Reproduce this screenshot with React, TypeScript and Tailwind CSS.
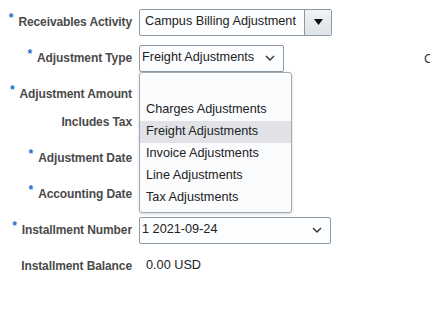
import React from "react";

const label = "text-[12px] tracking-[-0.1px] font-bold text-[#4a4a4a] leading-4";

function Req() {
  return <span className="text-[#1a6fc4] text-[12px] font-bold mr-[5px] relative -top-[4px]">*</span>;
}

function Chevron() {
  return (
    <svg width="10" height="6" viewBox="0 0 10 6" className="text-[#333]">
      <path d="M1 1 L5 5 L9 1" fill="none" stroke="currentColor" strokeWidth="1.4" />
    </svg>
  );
}

function Row({ req, text, h = "h-9", children }: { req?: boolean; text: string; h?: string; children?: React.ReactNode }) {
  return (
    <div className={`flex items-center ${h}`}>
      <div className={`w-[132px] shrink-0 text-right ${label}`}>
        {req && <Req />}
        {text}
      </div>
      <div className="ml-[7px] flex-1 flex items-center">{children}</div>
    </div>
  );
}

export default function App() {
  const items = ["", "Charges Adjustments", "Freight Adjustments", "Invoice Adjustments", "Line Adjustments", "Tax Adjustments"];

  return (
    <div className="w-[430px] h-[313px] overflow-hidden bg-white relative font-['Liberation_Sans',Arial,sans-serif]">
      <div className="flex pt-[4px]">
        <div className="w-[424px] shrink-0">
          <Row req text="Receivables Activity">
            <div className="flex h-[27px] w-[193px] border border-[#8b9aa6] rounded-[2px] bg-[#fcfdfe]">
              <div className="flex-1 flex items-center pl-[5px] text-[12.7px] text-[#222]">Campus Billing Adjustment</div>
              <div className="w-[27px] border-l border-[#8b9aa6] bg-gradient-to-b from-[#f1f3f5] to-[#dee2e6] flex items-center justify-center">
                <svg width="9" height="6" viewBox="0 0 9 6">
                  <path d="M0 0 H9 L4.5 6 Z" fill="#111" />
                </svg>
              </div>
            </div>
          </Row>
          <Row req text="Adjustment Type">
            <div className="flex items-center h-[27px] w-[145px] border border-[#8b9aa6] rounded-[2px] bg-[#fcfdfe] pl-[2px] pr-[8px] text-[12.7px] text-[#222]">
              <span className="flex-1">Freight Adjustments</span>
              <Chevron />
            </div>
          </Row>
          <Row req text="Adjustment Amount" />
          <div className="flex items-start h-7 pt-[2px]">
            <div className={`w-[132px] shrink-0 text-right ${label}`}>Includes Tax</div>
          </div>
          <Row req text="Adjustment Date" />
          <Row req text="Accounting Date" />
          <Row req text="Installment Number">
            <div className="flex items-center h-[27px] w-[192px] border border-[#8b9aa6] rounded-[2px] bg-[#fcfdfe] pl-[2px] pr-[8px] text-[12.7px] text-[#222]">
              <span className="flex-1">1 2021-09-24</span>
              <Chevron />
            </div>
          </Row>
          <Row text="Installment Balance">
            <span className="pl-[7px] text-[12.7px] text-[#222]">0.00 USD</span>
          </Row>
        </div>
        <div className="pt-[45px] text-[13px] text-[#333] whitespace-nowrap">C</div>
      </div>

      <div className="absolute left-[139px] top-[72px] w-[153px] h-[141px] border border-[#a3abb3] rounded-[3px] bg-[#fbfcfe] shadow-[0_1px_3px_rgba(0,0,0,0.18)] py-[4px]">
        {items.map((it) => (
          <div
            key={it || "blank"}
            className={`h-[22px] flex items-center pl-[6px] text-[12.7px] text-[#222] ${it === "Freight Adjustments" ? "bg-[#e1e2e7]" : ""}`}
          >
            {it}
          </div>
        ))}
      </div>
    </div>
  );
}
